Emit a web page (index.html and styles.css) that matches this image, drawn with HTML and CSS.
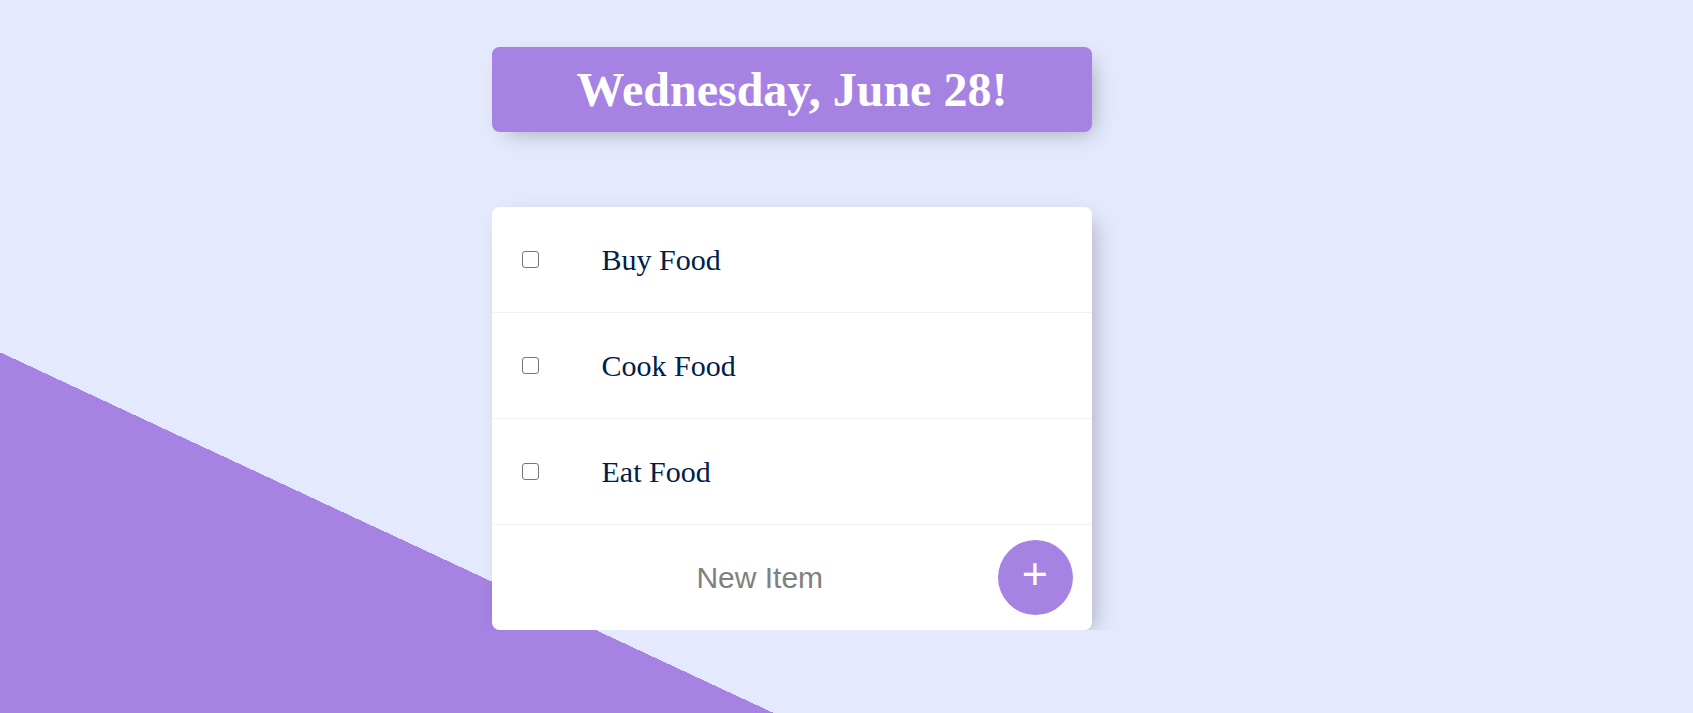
FILE: index.html
```html
<!DOCTYPE html>
<html lang="en">
<head>
<meta charset="utf-8">
<title>To-Do List</title>
<link rel="stylesheet" href="styles.css">
</head>
<body>
<div class="page">
  <div class="box heading">
    <h1 class="title">Wednesday, June 28!</h1>
  </div>
  <div class="box list">
    <div class="item">
      <input class="check" type="checkbox">
      <p class="label">Buy Food</p>
    </div>
    <div class="item">
      <input class="check" type="checkbox">
      <p class="label">Cook Food</p>
    </div>
    <div class="item">
      <input class="check" type="checkbox">
      <p class="label">Eat Food</p>
    </div>
    <form class="item new-form" action="/" method="post">
      <input class="new-input" type="text" name="newItem" placeholder="New Item" autocomplete="off">
      <button class="add-btn" type="submit" name="list">+</button>
    </form>
  </div>
</div>
</body>
</html>
```

FILE: styles.css
```css
html {
  background-color: #E4E9FD;
  background-image: linear-gradient(25deg, #A683E3 50%, #E4E9FD 50%);
  background-size: 1693px 1494px;
  background-repeat: no-repeat;
  min-height: 100%;
}

body {
  margin: 0;
  font-family: "Liberation Serif", "Times New Roman", serif;
}

.page {
  width: 600px;
  margin-left: 492px;
  padding-top: 47px;
}

.box {
  background: #ffffff;
  border-radius: 7.5px;
  box-shadow: 7.5px 7.5px 22.5px -7.5px rgba(0, 0, 0, 0.3);
}

.heading {
  background-color: #A683E3;
  text-align: center;
}

.title {
  margin: 0;
  padding: 15px;
  color: #ffffff;
  font-size: 48px;
  font-weight: bold;
  font-family: "Liberation Serif", "Times New Roman", serif;
}

.list {
  margin-top: 75px;
}

.item {
  min-height: 105px;
  display: flex;
  align-items: center;
  border-bottom: 1px solid #F1F1F1;
}

.item:last-child {
  border-bottom: 0;
}

.check {
  appearance: none;
  -webkit-appearance: none;
  box-sizing: border-box;
  width: 17px;
  height: 17px;
  margin: 0 32.5px 0 30px;
  border: 1.5px solid #767676;
  border-radius: 3px;
  background: #ffffff;
  flex: none;
}

.label {
  margin: 0;
  padding: 30px;
  font-size: 30px;
  font-weight: 200;
  color: #00204a;
}

.new-form {
  margin: 0 0 0 30px;
}

.new-input {
  text-align: center;
  height: 90px;
  border: none;
  background: transparent;
  font-family: "Liberation Sans", Arial, sans-serif;
  font-size: 30px;
  font-weight: 200;
  width: 469.5px;
  padding: 1.5px 3px;
  margin: 0;
  color: #333;
}

.new-input:focus {
  outline: none;
  box-shadow: inset 0 -4.5px 0 0 #A683E3;
}

.new-input::placeholder {
  color: grey;
  opacity: 1;
}

.add-btn {
  min-height: 75px;
  width: 75px;
  border-radius: 50%;
  border: 0;
  background-color: #A683E3;
  color: #fff;
  font-family: "Liberation Sans", Arial, sans-serif;
  font-size: 45px;
  line-height: 1;
  padding: 0 0 9px 0;
  margin: 0;
  flex: none;
}
```
